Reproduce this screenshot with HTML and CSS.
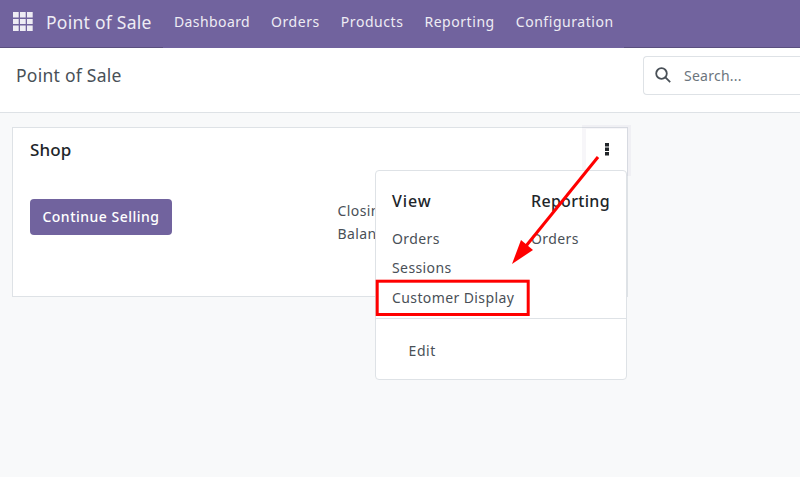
FILE: index.html
```html
<!DOCTYPE html>
<html lang="en">
<head>
<meta charset="utf-8">
<title>Point of Sale</title>
<link rel="stylesheet" href="styles.css">
</head>
<body>
<header class="navbar">
  <svg class="apps" viewBox="0 0 20 20" width="20" height="20"><path d="M0 0h5.7v5.5H0zM7 0h5.7v5.5H7zM14 0h5.7v5.5H14zM0 7h5.7v5H0zM7 7h5.7v5H7zM14 7h5.7v5H14zM0 13.5h5.7V19H0zM7 13.5h5.7V19H7zM14 13.5h5.7V19H14z"/></svg>
  <span class="brand">Point of Sale</span>
  <nav class="menu"><a class="dashboard">Dashboard</a><a>Orders</a><a>Products</a><a>Reporting</a><a>Configuration</a></nav>
</header>
<section class="control">
  <h1 class="title">Point of Sale</h1>
  <div class="search">
    <svg viewBox="0 0 16 16" width="16" height="16"><circle cx="6.5" cy="6.5" r="5.3"/><path d="M10.4 10.4L15.2 15.2"/></svg>
    <span>Search...</span>
  </div>
</section>
<main class="content">
  <article class="card">
    <h2>Shop</h2>
    <div class="card-body">
      <button class="primary">Continue Selling</button>
      <div class="facts"><div>Closing</div><div>Balance</div></div>
    </div>
    <div class="toggle"><svg viewBox="0 0 4 13" width="4" height="13"><path d="M0 0h4v3.4H0zM0 4.5h4v3.4H0zM0 9h4v3.4H0z"/></svg></div>
    <div class="dropdown">
      <div class="columns">
        <div class="col"><h3 class="view">View</h3><a>Orders</a><a>Sessions</a><a>Customer Display</a></div>
        <div class="col"><h3>Reporting</h3><a>Orders</a></div>
      </div>
      <div class="edit">Edit</div>
    </div>
  </article>
</main>
<svg class="marks" viewBox="0 0 800 477" width="800" height="477"><rect x="377.2" y="281.2" width="151" height="33.3"/><path class="line" d="M598 157L526 246"/><path class="head" d="M512 264L521 240L533 250Z"/></svg>
</body>
</html>
```
FILE: styles.css
```css
* { box-sizing: border-box; }
body { margin: 0; height: 477px; overflow: hidden; background: #f8f9fa; color: #495057; font: 14px/21px "Noto Sans", sans-serif; letter-spacing: .4px; }
h1, h2, h3 { margin: 0; font-weight: 400; }
.navbar { display: flex; align-items: center; height: 48px; padding: 0 0 5px 13px; background: linear-gradient(90deg, #5a4f7f 163px, #71639e 163px 624px, #5a4f7f 624px) left bottom / 100% 1px no-repeat #71639e; color: #eeecf4; }
.apps { fill: #eeecf4; }
.brand { width: 128px; margin-left: 13px; padding-top: 1px; font-size: 17.5px; letter-spacing: .26px; }
.menu { display: flex; gap: 21px; letter-spacing: .55px; }
.dashboard { letter-spacing: .4px; }
.control { display: flex; justify-content: space-between; height: 65px; padding: 8px 0 0 16px; background: #fff; border-bottom: 1px solid #dee2e6; }
.title { font-size: 17.5px; line-height: 39px; letter-spacing: .26px; }
.search { display: flex; align-items: center; gap: 13px; width: 157px; height: 39px; padding-left: 11px; border: 1px solid #dee2e6; border-right: 0; border-radius: 4px 0 0 4px; color: #6c757d; letter-spacing: .25px; }
.search svg { position: relative; top: -1px; fill: none; stroke: #495057; stroke-width: 1.8; }
.content { padding: 14px 12px; }
.card { position: relative; width: 616px; height: 170px; padding: 10px 17px; background: #fff; border: 1px solid #dee2e6; }
.card h2 { font-size: 17px; line-height: 23px; font-weight: 500; letter-spacing: .1px; color: #212529; }
.card-body { display: flex; padding-top: 38px; }
.primary { width: 142px; height: 36px; padding: 0 0 2px; border: 0; border-radius: 4px; background: #71639e; color: #fff; font: 500 14px/21px "Noto Sans", sans-serif; letter-spacing: .5px; }
.facts { margin: 0 0 0 165.5px; line-height: 23px; }
.toggle { position: absolute; right: -4px; top: -3px; width: 49px; height: 51px; padding: 14px 0 0 19px; border: 4px solid rgba(113, 99, 158, .06); }
.toggle svg { display: block; fill: #212529; }
.dropdown { position: absolute; left: 362px; top: 42px; width: 252px; height: 210px; background: #fff; border: 1px solid #dee2e6; border-radius: 4px; }
.columns { display: flex; height: 148px; padding: 18px 16px 0; border-bottom: 1px solid #dee2e6; }
.col:first-child { width: 139px; }
.col h3 { font-size: 16px; line-height: 24px; margin-bottom: 11px; font-weight: 500; letter-spacing: .3px; color: #212529; }
.col h3.view { letter-spacing: .9px; }
.col a { display: block; line-height: 29.4px; white-space: nowrap; }
.edit { padding: 21px 0 0 32.5px; letter-spacing: .6px; }
.marks { position: absolute; left: 0; top: 0; pointer-events: none; }
.marks rect, .line { fill: none; stroke: #f00; stroke-width: 3; }
.head { fill: #f00; }
```
